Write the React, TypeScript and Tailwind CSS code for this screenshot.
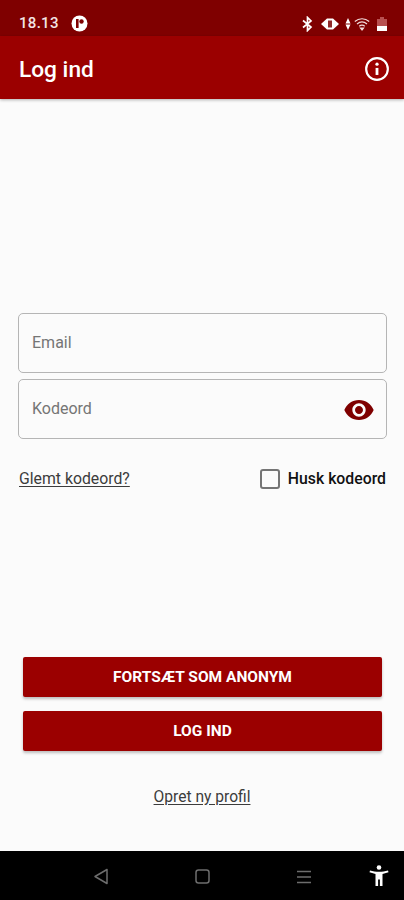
export default function App() {
  return (
    <div className="w-[404px] h-[900px] flex flex-col overflow-hidden bg-[#fbfbfb] font-['Roboto',sans-serif]">
      {/* Status bar */}
      <div className="h-[36px] shrink-0 bg-[#7f0000] flex items-center justify-between pl-[19px] pr-[16px] pt-[11px] text-white">
        <div className="flex items-center gap-[12px]">
          <span className="text-[15px] leading-none font-medium tracking-[0.3px] text-[#f3e4e4]">18.13</span>
          <svg width="17" height="17" viewBox="0 0 17 17">
            <circle cx="8.500" cy="8.500" r="8" fill="#fff" />
            <rect x="5" y="4" width="2.600" height="9" fill="#7f0000" />
            <circle cx="10.500" cy="6.500" r="2.200" fill="#7f0000" />
          </svg>
        </div>
        <div className="flex items-center gap-[5px]">
          <svg width="11" height="16" viewBox="0 0 11 16" fill="none" stroke="#fff" strokeWidth="1.700">
            <path d="M1 4.500 9 11 5.500 14.500V1.500L9 5 1 11.500" />
          </svg>
          <svg width="18" height="14" viewBox="0 0 18 14" className="ml-[3px]">
            <path d="M0 7 6 1.500h6L18 7l-6 5.500H6z" fill="#fff" />
            <rect x="7" y="3.500" width="4" height="7" fill="#8f2a2a" />
          </svg>
          <svg width="6" height="14" viewBox="0 0 6 14" className="ml-[1px]" fill="#fff">
            <path d="M3 1 5.500 6.500h-5z M3 13 .5 7.500h5z" />
          </svg>
          <svg width="16" height="14" viewBox="0 0 16 14" fill="none" stroke="#f3dcdc" strokeWidth="1.200" className="-ml-[2px]">
            <path d="M.8 4.500C5 .8 11 .8 15.200 4.500" />
            <path d="M3 7c3-2.500 7-2.500 10 0" />
            <path d="M5.200 9.300c1.700-1.300 3.900-1.300 5.600 0" />
            <path d="M8 13 6.500 11h3z" fill="#f3dcdc" />
          </svg>
          <svg width="12" height="16" viewBox="0 0 12 16" className="ml-[1px]">
            <path d="M4 1h4v2h3v12H1V3h3z" fill="#b85050" />
            <rect x="1" y="10" width="10" height="5" fill="#fff" />
          </svg>
        </div>
      </div>

      {/* App bar */}
      <div className="h-[63px] shrink-0 bg-[#9b0000] flex items-center justify-between pl-[19px] pr-[14px] pt-[2px] shadow-[0_1px_3px_rgba(0,0,0,0.3)]">
        <span className="text-[22.700px] font-medium text-white leading-none pt-[3px]">Log ind</span>
        <svg width="26" height="26" viewBox="0 0 24 24" fill="none" stroke="#fff" strokeWidth="2">
          <circle cx="12" cy="12" r="10" />
          <path d="M12 11v6.500" strokeWidth="2.600" />
          <circle cx="12" cy="7.500" r="1.500" fill="#fff" stroke="none" />
        </svg>
      </div>

      {/* Content */}
      <div className="flex-1 flex flex-col">
        <div className="mt-[214px] ml-[18px] mr-[17px] flex flex-col gap-[6px]">
          <div className="h-[60px] rounded-[5px] border border-[#b5b5b5] flex items-center px-[13px]">
            <span className="text-[16px] text-[#757575]">Email</span>
          </div>
          <div className="h-[60px] rounded-[5px] border border-[#b5b5b5] flex items-center justify-between pl-[13px] pr-[11px]">
            <span className="text-[16px] text-[#757575]">Kodeord</span>
            <svg width="32" height="32" viewBox="0 0 24 24" fill="#7f0000" className="mt-[1px]">
              <path d="M12 4.500C7 4.500 2.730 7.610 1 12c1.730 4.390 6 7.500 11 7.500s9.270-3.110 11-7.500c-1.730-4.390-6-7.500-11-7.500zM12 17c-2.760 0-5-2.240-5-5s2.240-5 5-5 5 2.240 5 5-2.240 5-5 5zm0-8c-1.660 0-3 1.340-3 3s1.340 3 3 3 3-1.340 3-3-1.340-3-3-3z" />
            </svg>
          </div>
        </div>

        <div className="mt-[28px] ml-[19px] mr-[18px] flex items-center justify-between">
          <span className="text-[15.800px] text-[#3c3c3c] underline underline-offset-2">Glemt kodeord?</span>
          <div className="flex items-center gap-[8px]">
            <div className="w-[20px] h-[20px] rounded-[3px] border-2 border-[#757575]" />
            <span className="text-[15.800px] font-medium text-[#111]">Husk kodeord</span>
          </div>
        </div>

        <div className="mt-[166px] ml-[23px] mr-[22px] flex flex-col gap-[14px]">
          <div className="h-[40px] bg-[#9b0000] rounded-[2px] shadow-[0_2px_3px_rgba(0,0,0,0.25)] flex items-center justify-center pt-[1px] text-white text-[15.500px] font-bold">
            FORTSÆT SOM ANONYM
          </div>
          <div className="h-[40px] bg-[#9b0000] rounded-[2px] shadow-[0_2px_3px_rgba(0,0,0,0.25)] flex items-center justify-center pt-[1px] text-white text-[15.500px] font-bold">
            LOG IND
          </div>
        </div>

        <div className="mt-[35px] flex justify-center">
          <span className="text-[15.600px] text-[#3c3c3c] underline underline-offset-2">Opret ny profil</span>
        </div>
      </div>

      {/* Nav bar */}
      <div className="h-[49px] shrink-0 bg-black relative flex items-center justify-center gap-[86px] pt-[2px]">
        <svg width="16" height="17" viewBox="0 0 16 17" fill="none" stroke="#6d6d6d" strokeWidth="1.500">
          <path d="M14 1.500v14L2 8.500z" strokeLinejoin="round" />
        </svg>
        <svg width="15" height="15" viewBox="0 0 15 15" fill="none" stroke="#6d6d6d" strokeWidth="1.500">
          <rect x="1" y="1" width="13" height="13" rx="2.500" />
        </svg>
        <svg width="16" height="14" viewBox="0 0 16 14" fill="none" stroke="#6d6d6d" strokeWidth="1.500">
          <path d="M1 1.500h14M1 7h14M1 12.500h14" />
        </svg>
        <svg width="20" height="22" viewBox="0 0 20 22" fill="#fff" className="absolute right-[15px] top-[14px]">
          <circle cx="10" cy="2.500" r="2.300" />
          <path d="M1 5.500 0.500 7.200l6 1.800V21h2.600v-6.500h1.800V21h2.600V9l6-1.800L19 5.500c-2.800.8-5.800 1.300-9 1.300S3.800 6.300 1 5.500z" />
        </svg>
      </div>
    </div>
  );
}
